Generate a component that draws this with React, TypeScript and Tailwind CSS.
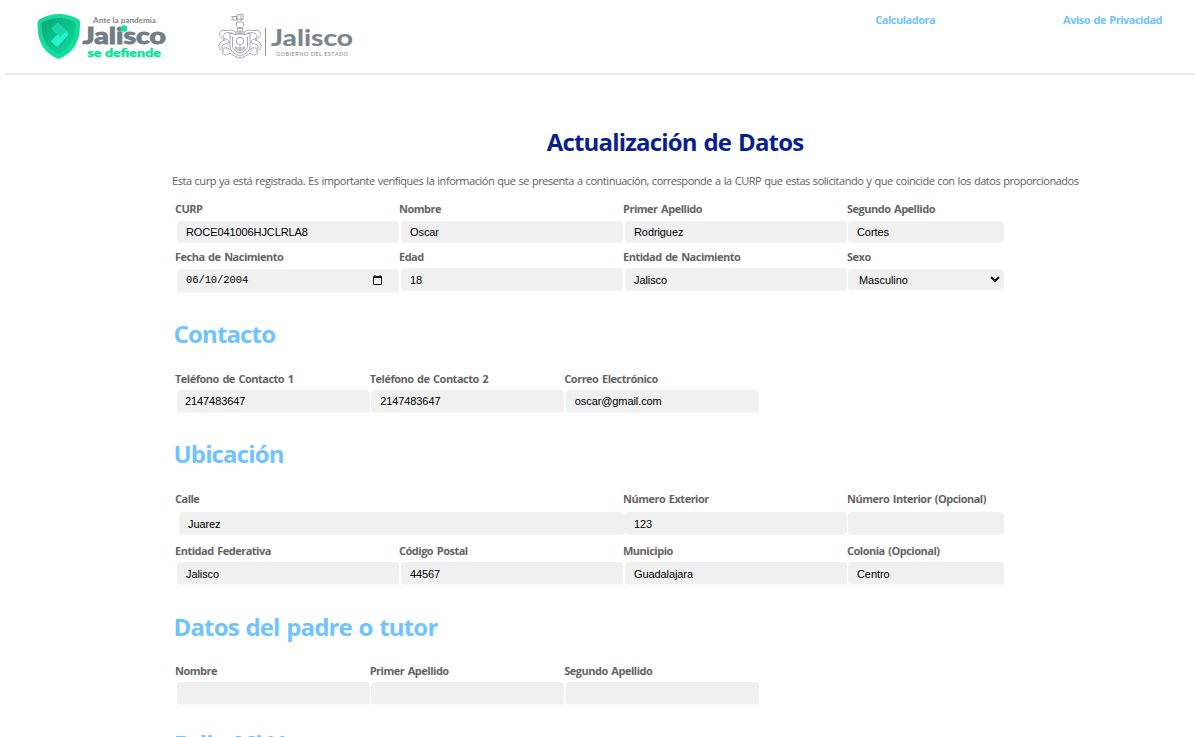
import React from "react";

const sans = "font-['Open_Sans','Noto_Sans',sans-serif]";

function DefiendeLogo() {
  return (
    <svg width="134" height="50" viewBox="36 12 134 50" role="img" aria-label="Jalisco se defiende">
      <defs>
        <linearGradient id="rim" x1="0" y1="0" x2="1" y2="1">
          <stop offset="0" stopColor="#1fd69c" />
          <stop offset="1" stopColor="#07e795" />
        </linearGradient>
        <linearGradient id="core" x1="0" y1="0" x2="1" y2="1">
          <stop offset="0" stopColor="#08a87a" />
          <stop offset="0.5" stopColor="#0cc08a" />
          <stop offset="1" stopColor="#14dfa0" />
        </linearGradient>
      </defs>
      <path d="M58.500 14C65 14 73 16 78 19C80 20 80 22 80 25C80 43 72 54 58.500 59C45 54 37.500 43 37.500 25C37.500 22 37.500 20 40 19C45 16 52 14 58.500 14Z" fill="url(#rim)" />
      <path d="M58.500 18C64 18 70 19.500 74.500 22Q76 23 76 26C75 40 69 49 58.500 54C48 49 42 40 41.500 26Q41.500 23 43 22C48 19.500 53 18 58.500 18Z" fill="url(#core)" />
      <path d="M51 43L56 48L62 45L68 36L60 40Z" fill="#0cb483" />
      <path d="M51.500 28.500L57 23.500Q58 22.700 59 23.700L68 32.500Q69 34 68 35.500L58.500 46Q57 47.300 55.500 46L51.500 42Q51 41.300 51.700 40.500L57.500 34.500Z" fill="#23f5cb" />
      <path d="M51.500 28.500L57 23.500Q58 22.700 59 23.700L66.500 31L60 37Z" fill="#18d6a8" />
      <text x="93" y="22.500" textLength="63" lengthAdjust="spacingAndGlyphs" fontSize="7" fontWeight="700" fill="#7d878d" fontFamily="Lato, sans-serif">Ante la pandemia</text>
      <text x="82.500" y="43.500" textLength="83.500" lengthAdjust="spacingAndGlyphs" fontSize="22.500" fontWeight="900" fill="#727e86" stroke="#727e86" strokeWidth="0.900" fontFamily="Lato, sans-serif">Jalisco</text>
      <circle cx="124" cy="28.500" r="3.200" fill="#07e795" />
      <text x="87.500" y="56.500" textLength="73.500" lengthAdjust="spacingAndGlyphs" fontSize="12" fontWeight="900" fill="#08e495" stroke="#08e495" strokeWidth="0.400" fontFamily="Lato, sans-serif">se defiende</text>
    </svg>
  );
}

function GobiernoLogo() {
  return (
    <svg width="140" height="50" viewBox="216 12 140 50" role="img" aria-label="Jalisco Gobierno del Estado">
      <g fill="none" stroke="#8b959b" strokeWidth="0.800">
        <path d="M241 21V15M231.500 16.500H237L236 18L237.500 20H231.500L233.500 18ZM237 15L243 14V19.500L237 19Z" />
        <path d="M237 22H243L244 25L242.500 27.500H237.500L236 25ZM237.500 28.500H242.500V31H237.500ZM235 32H245M235 34H245" />
        <path d="M230 33V46Q230 53 240 56Q250 53 250 46V33Q245 36 240 33Q235 36 230 33Z" />
        <path d="M232.500 37V46Q233 51 240 53.500Q247 51 247.500 46V37" />
        <circle cx="240" cy="41" r="3.700" />
        <path d="M240 45V53M236 46V51M244 46V51M235 48H245M237 50H243" />
        <path d="M235 32C231 28 227 32 222 30C218 33 219 38 225 40C216 42 218 51 224 50C220 54 226 57 230 53C234 56 236 57 240 58C244 57 246 56 250 53C254 57 260 54 256 50C262 51 264 42 255 40C261 38 262 33 258 30C253 32 249 28 245 32" />
        <path d="M233 34C228 31 223 33 223 37C224 40 228 38 229 42C227 45 221 43 222 48C225 49 227 46 230 50M247 34C252 31 257 33 257 37C256 40 252 38 251 42C253 45 259 43 258 48C255 49 253 46 250 50" />
      </g>
      <path d="M265.500 28V56" stroke="#8a9398" />
      <text x="271" y="45.500" textLength="82" lengthAdjust="spacingAndGlyphs" fontSize="23.500" fontWeight="700" fill="#7b868c" stroke="#7b868c" strokeWidth="0.200" fontFamily="Lato, sans-serif">Jalisco</text>
      <text x="276" y="55.500" textLength="72" fontSize="5.500" fill="#7b868c" fontFamily="Lato, sans-serif">GOBIERNO DEL ESTADO</text>
    </svg>
  );
}

function Label({ children }: { children: React.ReactNode }) {
  return <label className="block h-4 whitespace-nowrap text-[11px] leading-4 font-bold tracking-[-0.500px] [word-spacing:1.200px] text-[#646464]">{children}</label>;
}

const box = "flex items-center rounded-[4px] border-b border-[#f5f5f5] bg-[#f0f0f0] text-[11px] tracking-[-0.090px] text-black font-['Liberation_Sans',Arial,sans-serif]";

type FieldProps = { label: string; value?: string; col: string; input: string };

function Field({ label, value = "", col, input }: FieldProps) {
  return (
    <div className={`shrink-0 ${col}`}>
      <Label>{label}</Label>
      <input className={`${box} block px-[9px] outline-none ${input}`} defaultValue={value} />
    </div>
  );
}

function SectionTitle({ children }: { children: React.ReactNode }) {
  return <h2 className="-ml-[1.500px] h-8 whitespace-nowrap text-[24px] leading-8 font-bold tracking-[-0.850px] [word-spacing:1.300px] text-[#70c3ff]">{children}</h2>;
}

export default function App() {
  return (
    <div className={`h-[737px] w-[1195px] overflow-hidden bg-white ${sans}`}>
      <header className="ml-[5px] flex h-[75px] items-start border-b-2 border-[#ededed] pt-3">
        <div className="ml-[31px]"><DefiendeLogo /></div>
        <div className="ml-[46px]"><GobiernoLogo /></div>
        <nav className="ml-auto flex gap-32 pr-[33px] text-[11px] leading-4 font-bold tracking-[-0.500px] [word-spacing:1px] text-[#70c3ff]">
          <a href="#calculadora" className="whitespace-nowrap">Calculadora</a>
          <a href="#aviso" className="whitespace-nowrap">Aviso de Privacidad</a>
        </nav>
      </header>

      <main className="pl-[175px]">
        <h1 className="mt-[51px] h-8 w-[1000px] text-center text-[24px] leading-8 font-bold tracking-[-0.830px] [word-spacing:1.400px] text-[#0a1f8f]">Actualización de Datos</h1>
        <p className="-ml-[3px] mt-[15px] h-4 whitespace-nowrap text-[11px] leading-4 tracking-[-0.460px] [word-spacing:0.600px] text-[#606060]">
          Esta curp ya está registrada. Es importante verifiques la información que se presenta a continuación, corresponde a la CURP que estas solicitando y que coincide con los datos proporcionados
        </p>

        <section>
          <div className="mt-3 flex h-12">
            <Field label="CURP" value="ROCE041006HJCLRLA8" col="w-56" input="ml-0.5 mt-1 h-[22px] w-[222px]" />
            <Field label="Nombre" value="Oscar" col="w-56" input="ml-0.5 mt-1 h-[22px] w-[222px]" />
            <Field label="Primer Apellido" value="Rodriguez" col="w-56" input="ml-0.5 mt-1 h-[22px] w-[222px]" />
            <Field label="Segundo Apellido" value="Cortes" col="w-56" input="ml-px mt-1 h-[22px] w-[156px]" />
          </div>
          <div className="flex h-[69px]">
            <div className="w-56 shrink-0">
              <Label>Fecha de Nacimiento</Label>
              <div className={`${box} ml-0.5 mt-1 h-6 w-[222px] justify-between pr-[17px] pl-[9px]`}>
                <span className="font-['Liberation_Mono',monospace] text-[10.500px]">06/10/2004</span>
                <svg className="mb-0.5" width="9" height="10" viewBox="0 0 9 10" fill="none" stroke="#151515">
                  <path d="M.5 1.500H8.500V9.500H.5Z" />
                  <path d="M0 2.500H9M2 0V2M7 0V2" />
                </svg>
              </div>
            </div>
            <Field label="Edad" value="18" col="w-56" input="ml-0.5 mt-[3px] h-[23px] w-[222px] pt-0.5" />
            <Field label="Entidad de Nacimiento" value="Jalisco" col="w-56" input="ml-0.5 mt-[3px] h-[23px] w-[222px] pt-0.5" />
            <div className="w-56 shrink-0">
              <Label>Sexo</Label>
              <div className={`${box} ml-px mt-1 h-[21px] w-[156px] justify-between pr-1 pl-[11px]`}>
                <span className="pt-0.5">Masculino</span>
                <svg width="10" height="7" viewBox="0 0 10 7" fill="none" stroke="#101010" strokeWidth="2">
                  <path d="M1 1L5 5L9 1" />
                </svg>
              </div>
            </div>
          </div>
        </section>

        <section>
          <SectionTitle>Contacto</SectionTitle>
          <div className="mt-[21px] flex h-[67px]">
            <Field label="Teléfono de Contacto 1" value="2147483647" col="w-[194.660px]" input="ml-0.5 mt-[3px] h-[23px] w-[192.500px] pl-2" />
            <Field label="Teléfono de Contacto 2" value="2147483647" col="w-[194.660px]" input="ml-[1.500px] mt-[3px] h-[23px] w-[193px]" />
            <Field label="Correo Electrónico" value="oscar@gmail.com" col="w-[194.660px]" input="ml-[1.500px] mt-[3px] h-[23px] w-[193px]" />
          </div>
        </section>

        <section>
          <SectionTitle>Ubicación</SectionTitle>
          <div className="mt-[21px] flex h-[52px]">
            <Field label="Calle" value="Juarez" col="w-[448px]" input="ml-1 mt-[5px] h-[23px] w-[446px] pt-0.5" />
            <Field label="Número Exterior" value="123" col="w-56" input="ml-0.5 mt-[5px] h-[23px] w-[222px] pt-0.5" />
            <Field label="Número Interior (Opcional)" col="w-56" input="ml-px mt-[5px] h-[23px] w-[156px]" />
          </div>
          <div className="flex h-[68px]">
            <Field label="Entidad Federativa" value="Jalisco" col="w-56" input="ml-0.5 mt-[3px] h-[23px] w-[222px] pt-0.5" />
            <Field label="Código Postal" value="44567" col="w-56" input="ml-0.5 mt-[3px] h-[23px] w-[222px] pt-0.5" />
            <Field label="Municipio" value="Guadalajara" col="w-56" input="ml-0.5 mt-[3px] h-[23px] w-[222px] pt-0.5" />
            <Field label="Colonia (Opcional)" value="Centro" col="w-56" input="ml-px mt-[3px] h-[23px] w-[156px] pt-0.5" />
          </div>
        </section>

        <section>
          <SectionTitle>Datos del padre o tutor</SectionTitle>
          <div className="mt-5 flex h-[65px]">
            <Field label="Nombre" col="w-[194.660px]" input="ml-0.5 mt-[3px] h-[23px] w-[192.500px]" />
            <Field label="Primer Apellido" col="w-[194.660px]" input="ml-[1.500px] mt-[3px] h-[23px] w-[193px]" />
            <Field label="Segundo Apellido" col="w-[194.660px]" input="ml-[1.500px] mt-[3px] h-[23px] w-[193px]" />
          </div>
        </section>

        <SectionTitle>Folio Mi Vacuna</SectionTitle>
      </main>
    </div>
  );
}
